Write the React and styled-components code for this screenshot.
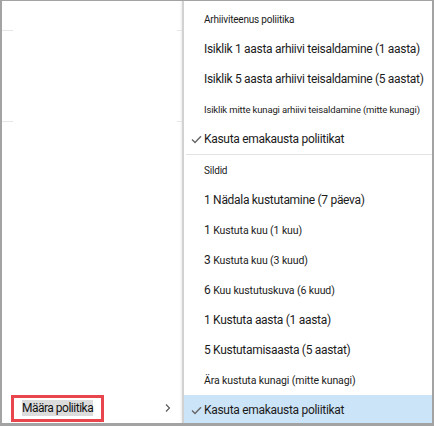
import React from 'react';
import styled, { createGlobalStyle } from 'styled-components';

const Global = createGlobalStyle`
    html, body {
        margin: 0;
        padding: 0;
        background: #fff;
    }
    body {
        font-family: Roboto, "Liberation Sans", Arial, sans-serif;
        color: #1b1b1b;
    }
`;

const Frame = styled.div`
    box-sizing: border-box;
    width: 434px;
    height: 426px;
    display: flex;
    border: 2px solid #a3a3a3;
    border-top-width: 1px;
    border-bottom-width: 3px;
    background: #fff;
    overflow: hidden;
`;

const Pane = styled.div`
    position: relative;
    width: 180px;
    flex-shrink: 0;
    display: flex;
    flex-direction: column;
    justify-content: flex-end;
`;

const RowLine = styled.div`
    position: absolute;
    left: 0;
    right: 0;
    top: ${p => p.$top}px;
    height: 1px;
    background: linear-gradient(
        to right,
        #e6e6e6 0,
        #e6e6e6 11px,
        transparent 11px,
        transparent 175px,
        #e6e6e6 175px
    );
`;

const PaneItem = styled.div`
    display: flex;
    align-items: center;
    justify-content: space-between;
    height: 30px;
    padding: 0 11px 0 9px;
`;

const Callout = styled.span`
    display: flex;
    align-items: center;
    height: 21px;
    padding: 0 8px;
    border: 3px solid #e8464c;
`;

const Selected = styled.span`
    font-size: 12px;
    letter-spacing: -0.5px;
    color: #111;
    background: #dcdcdc;
    padding: 1px 0;
`;

const Chevron = styled.svg`
    width: 6px;
    height: 8px;
`;

const Menu = styled.div`
    flex: 1;
    min-width: 0;
    display: flex;
    flex-direction: column;
    padding-top: 3px;
    border-left: 2px solid #d2d2d2;
    box-shadow: -1px 0 2px rgba(0, 0, 0, 0.08);
`;

const Item = styled.div`
    display: flex;
    align-items: center;
    height: 30px;
    flex-shrink: 0;
    padding-left: 4px;
    background: ${p => (p.$active ? '#cce4f7' : 'transparent')};
`;

const Check = styled.span`
    width: 16px;
    flex-shrink: 0;
    display: flex;
    justify-content: center;
`;

const Label = styled.span`
    font-size: ${p => p.$size || 12}px;
    letter-spacing: ${p => p.$track ?? -0.3}px;
    color: #1b1b1b;
    white-space: nowrap;
`;

const Small = styled.span`
    font-size: 10.5px;
    letter-spacing: -0.1px;
`;

const Separator = styled.div`
    height: 1px;
    margin-left: 2px;
    background: #e3e3e3;
    flex-shrink: 0;
`;

const Tick = () => (
    <svg width="11" height="9" viewBox="0 0 11 9">
        <path d="M1 4.6 L4 7.6 L10 1.2" fill="none" stroke="#666" strokeWidth="1.4" />
    </svg>
);

const archive = [
    { text: 'Arhiiviteenus poliitika', size: 10, track: -0.2 },
    { text: 'Isiklik 1 aasta arhiivi teisaldamine (1 aasta)' },
    { text: 'Isiklik 5 aasta arhiivi teisaldamine (5 aastat)' },
    { text: 'Isiklik mitte kunagi arhiivi teisaldamine (mitte kunagi)', size: 9.5, track: -0.15 },
    { text: 'Kasuta emakausta poliitikat', checked: true }
];

const tags = [
    { text: 'Sildid', size: 10, track: -0.2 },
    { text: '1 Nädala kustutamine (7 päeva)' },
    { num: '1', text: 'Kustuta kuu (1 kuu)' },
    { num: '3', text: 'Kustuta kuu (3 kuud)' },
    { num: '6', text: 'Kuu kustutuskuva (6 kuud)' },
    { text: '1 Kustuta aasta (1 aasta)' },
    { text: '5 Kustutamisaasta (5 aastat)' },
    { text: 'Ära kustuta kunagi (mitte kunagi)', size: 10.5, track: -0.1 },
    { text: 'Kasuta emakausta poliitikat', checked: true, active: true }
];

const renderItem = (item, i) => (
    <Item key={i} $active={item.active}>
        <Check>{item.checked && <Tick />}</Check>
        <Label $size={item.size} $track={item.track}>
            {item.num ? (
                <>
                    {item.num} <Small>{item.text}</Small>
                </>
            ) : (
                item.text
            )}
        </Label>
    </Item>
);

export default function App() {
    return (
        <>
            <Global />
            <Frame>
                <Pane>
                    <RowLine $top={29} />
                    <RowLine $top={120} />
                    <PaneItem>
                        <Callout>
                            <Selected>Määra poliitika</Selected>
                        </Callout>
                        <Chevron viewBox="0 0 6 8">
                            <path d="M1 0.5 L4.5 4 L1 7.5" fill="none" stroke="#555" strokeWidth="1.1" />
                        </Chevron>
                    </PaneItem>
                </Pane>
                <Menu>
                    {archive.map(renderItem)}
                    <Separator />
                    {tags.map(renderItem)}
                </Menu>
            </Frame>
        </>
    );
}
